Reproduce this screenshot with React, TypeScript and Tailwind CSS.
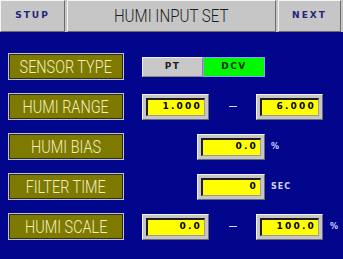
import React from 'react';

const thin = "font-['Roboto',Arial,sans-serif] font-light";
const wide = "font-['DejaVu_Sans',Verdana,sans-serif]";

function HeaderButton({ label, className }: { label: string; className: string }) {
  return (
    <div
      className={`h-full flex items-center justify-center border border-t-[#f4f4f4] border-l-[#f4f4f4] border-b-[#6c6c6c] border-r-[#6c6c6c] ${className}`}
    >
      <span className={`${wide} text-[9px] font-bold tracking-[2px] text-[#23237a]`}>{label}</span>
    </div>
  );
}

function Label({ text }: { text: string }) {
  return (
    <div className="w-[116px] h-[27px] shrink-0 bg-[#7e7a00] border border-[#c4c4c4] shadow-[inset_1px_1px_0_#2a2a2a,inset_-1px_-1px_0_#2a2a2a] flex items-center justify-center">
      <span className={`${thin} inline-block scale-x-[0.76] text-[19px] leading-none text-[#f2efc6] whitespace-nowrap`}>
        {text}
      </span>
    </div>
  );
}

function ValueBox({ value, className = '' }: { value: string; className?: string }) {
  return (
    <div
      className={`w-[67px] h-[26px] shrink-0 bg-[#c6c6c6] border border-t-[#f2f2f2] border-l-[#f2f2f2] border-b-[#6a6a6a] border-r-[#6a6a6a] p-[3px] ${className}`}
    >
      <div className="h-full bg-[#ffff00] border-t-2 border-l-2 border-t-[#1c1c1c] border-l-[#1c1c1c] border-b border-r border-b-[#9a9a9a] border-r-[#9a9a9a] flex items-center justify-end pr-[2px]">
        <span className={`${wide} text-[9px] font-bold tracking-[2.2px] text-black`}>{value}</span>
      </div>
    </div>
  );
}

function Unit({ text, className = '' }: { text: string; className?: string }) {
  return <span className={`${wide} text-[8px] font-bold tracking-[1px] text-[#d6d6ff] ${className}`}>{text}</span>;
}

function Dash() {
  return <div className="w-[47px] flex justify-center"><div className="w-[8px] h-[1px] bg-[#d6d6ff]" /></div>;
}

export default function App() {
  return (
    <div className="w-[343px] h-[259px] bg-[#02068c] overflow-hidden">
      <div className="flex h-[32px] bg-[#c6c6c6] gap-[2px] pr-[2px]">
        <HeaderButton label="STUP" className="w-[65px]" />
        <div className="w-[209px] h-full flex items-center justify-center border border-t-[#f4f4f4] border-l-[#f4f4f4] border-b-[#6c6c6c] border-r-[#6c6c6c]">
          <span className={`${thin} inline-block scale-x-[0.84] text-[18px] leading-none text-[#1e1e1e] whitespace-nowrap`}>
            HUMI INPUT SET
          </span>
        </div>
        <HeaderButton label="NEXT" className="flex-1" />
      </div>

      <div className="pl-[8px] pt-[21px] flex flex-col gap-[13px]">
        <div className="flex items-center gap-[18px]">
          <Label text="SENSOR TYPE" />
          <div className="flex h-[20px] w-[123px] mt-[1px]">
            <div className="w-[61px] h-full bg-[#c8c8c8] border border-t-[#eeeeee] border-l-[#eeeeee] border-b-[#8a8a8a] border-r-[#8a8a8a] flex items-center justify-center">
              <span className={`${wide} text-[9px] font-bold tracking-[1.5px] text-[#222]`}>PT</span>
            </div>
            <div className="flex-1 h-full bg-[#00f800] border border-[#8c9cff] flex items-center justify-center">
              <span className={`${wide} text-[9px] font-bold tracking-[1.5px] text-[#0a2a0a]`}>DCV</span>
            </div>
          </div>
        </div>

        <div className="flex items-center gap-[18px]">
          <Label text="HUMI RANGE" />
          <div className="flex items-center">
            <ValueBox value="1.000" />
            <Dash />
            <ValueBox value="6.000" />
          </div>
        </div>

        <div className="flex items-center gap-[18px]">
          <Label text="HUMI BIAS" />
          <div className="flex items-center">
            <ValueBox value="0.0" className="ml-[55px] w-[68px]" />
            <Unit text="%" className="ml-[6px]" />
          </div>
        </div>

        <div className="flex items-center gap-[18px]">
          <Label text="FILTER TIME" />
          <div className="flex items-center">
            <ValueBox value="0" className="ml-[55px] w-[68px]" />
            <Unit text="SEC" className="ml-[6px]" />
          </div>
        </div>

        <div className="flex items-center gap-[18px]">
          <Label text="HUMI SCALE" />
          <div className="flex items-center">
            <ValueBox value="0.0" />
            <Dash />
            <ValueBox value="100.0" />
            <Unit text="%" className="ml-[7px]" />
          </div>
        </div>
      </div>
    </div>
  );
}
